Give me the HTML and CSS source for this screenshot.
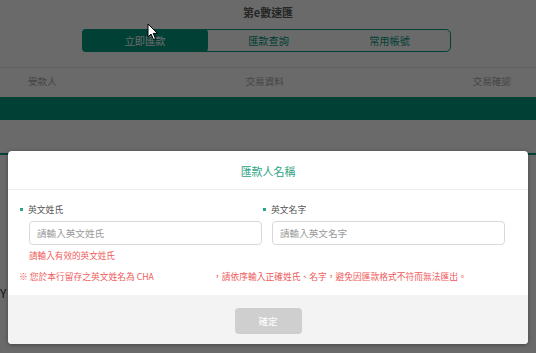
FILE: index.html
```html
<!DOCTYPE html>
<html lang="zh-Hant">
<head>
<meta charset="utf-8">
<title>第e數速匯</title>
<link rel="stylesheet" href="styles.css">
</head>
<body>
<div class="page">
  <div class="app">
    <h1 class="app-title">第e數速匯</h1>
    <nav class="tabs">
      <div class="tab active">立即匯款</div>
      <div class="tab">匯款查詢</div>
      <div class="tab">常用帳號</div>
    </nav>
    <div class="steps">
      <span class="step">受款人</span>
      <span class="step">交易資料</span>
      <span class="step">交易確認</span>
    </div>
    <div class="bar"></div>
    <div class="rule"></div>
    <div class="content-text">Y</div>
  </div>

  <div class="overlay">
    <div class="modal">
      <div class="modal-header">匯款人名稱</div>
      <div class="modal-body">
        <div class="form-grid">
          <div class="field">
            <div class="field-label"><span class="dot"></span>英文姓氏</div>
            <div class="input"><span class="placeholder">請輸入英文姓氏</span></div>
            <div class="field-error">請輸入有效的英文姓氏</div>
          </div>
          <div class="field">
            <div class="field-label"><span class="dot"></span>英文名字</div>
            <div class="input"><span class="placeholder">請輸入英文名字</span></div>
          </div>
        </div>
        <p class="notice"><span class="notice-name">※ 您於本行留存之英文姓名為 CHA</span><span>，請依序輸入正確姓氏、名字，避免因匯款格式不符而無法匯出。</span></p>
      </div>
      <div class="modal-footer">
        <button class="btn-confirm" type="button">確定</button>
      </div>
    </div>
  </div>

  <svg class="cursor" width="12" height="18" viewBox="0 0 12 18" aria-hidden="true">
    <path d="M1 1 L1 14 L4 11 L6.5 16.5 L8.5 15.6 L6.2 10.4 L10.5 10.4 Z" fill="#fff" stroke="#000" stroke-width="1" stroke-linejoin="round"/>
  </svg>
</div>
</body>
</html>
```

FILE: styles.css
```css
* { box-sizing: border-box; }

html, body {
  margin: 0;
  padding: 0;
}

body {
  font-family: "Noto Sans CJK TC", "Noto Sans", sans-serif;
  background: #fff;
}

.page {
  position: relative;
  width: 536px;
  height: 353px;
  overflow: hidden;
  background: #fff;
}

/* underlying app */
.app-title {
  margin: 0;
  height: 24px;
  line-height: 24px;
  text-align: center;
  font-size: 10.95px;
  font-weight: 700;
  color: #5a5a5a;
}

.tabs {
  display: flex;
  width: 369px;
  height: 23px;
  margin: 5px 0 0 82px;
  border: 1px solid #009a80;
  border-radius: 5px;
}

.tab {
  flex: 1;
  text-align: center;
  line-height: 21px;
  font-size: 10.2px;
  color: #009a80;
}

.tab.active {
  flex: 0 0 126px;
  margin: -1px 0 -1px -1px;
  line-height: 23px;
  background: #009a80;
  color: #fff;
  border-radius: 4px;
}

.steps {
  display: flex;
  justify-content: space-between;
  height: 30px;
  margin-top: 15px;
  padding: 0 25px 0 28px;
  border-top: 1px solid #e4e4e4;
  line-height: 27px;
  font-size: 9.6px;
  color: #a8a8a8;
}

.bar {
  height: 23px;
  background: #009a80;
}

.rule {
  height: 2px;
  margin-top: 33px;
  background: #009a80;
}

.content-text {
  margin: 131px 0 0 0;
  font-size: 12px;
  line-height: 14px;
  color: #333;
}

/* overlay + modal */
.overlay {
  position: absolute;
  inset: 0;
  padding: 151px 8px 0;
  background: rgba(0, 0, 0, 0.585);
}

.modal {
  background: #fff;
  border-radius: 4px;
  overflow: hidden;
  box-shadow: 0 1px 4px rgba(0, 0, 0, 0.35);
}

.modal-header {
  height: 39px;
  padding-top: 2px;
  line-height: 37px;
  text-align: center;
  font-size: 10.95px;
  color: #2ea486;
  border-bottom: 1px solid #eeeeee;
}

.modal-body {
  padding: 13px 11px 12px;
}

.form-grid {
  display: grid;
  grid-template-columns: 243px 243px;
}

.field-label {
  display: flex;
  align-items: center;
  height: 12px;
  font-size: 8.8px;
  color: #555;
}

.dot {
  width: 3px;
  height: 3px;
  margin: 0 5px 0 1px;
  background: #2ea486;
}

.input {
  height: 24px;
  margin: 6px 0 0 10px;
  padding-left: 7px;
  border: 1px solid #d9d9d9;
  border-radius: 4px;
  line-height: 22px;
  font-size: 9.6px;
}

.placeholder {
  color: #9a9a9a;
}

.field-error {
  height: 12px;
  margin: 4px 0 0 10px;
  line-height: 12px;
  font-size: 8.6px;
  color: #f05a5a;
}

.notice {
  margin: 10px 0 0;
  height: 12px;
  line-height: 12px;
  font-size: 8.75px;
  color: #f05a5a;
  white-space: nowrap;
}

.notice-name {
  display: inline-block;
  width: 194px;
}

.modal-footer {
  height: 49px;
  padding-top: 11px;
  background: #f3f3f3;
  text-align: center;
}

.btn-confirm {
  width: 67px;
  height: 26px;
  border: 0;
  border-radius: 4px;
  background: #cfcfcf;
  color: #fff;
  font-family: inherit;
  font-size: 9.6px;
  padding: 0;
}

.cursor {
  position: absolute;
  left: 147px;
  top: 23px;
}
```
